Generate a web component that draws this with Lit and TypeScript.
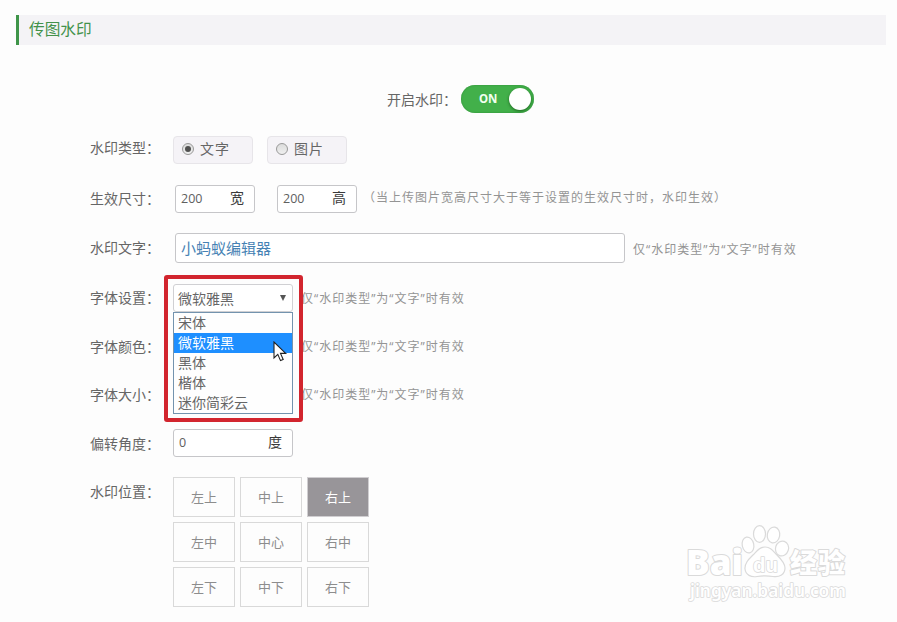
import { LitElement, html, css, svg } from "lit";
import { customElement, state } from "lit/decorators.js";
import { classMap } from "lit/directives/class-map.js";

const FONTS = ["宋体", "微软雅黑", "黑体", "楷体", "迷你简彩云"];
const POSITIONS = ["左上", "中上", "右上", "左中", "中心", "右中", "左下", "中下", "右下"];
const TEXT_ONLY = "仅“水印类型”为“文字”时有效";

@customElement("app-root")
export class AppRoot extends LitElement {
  @state() private kind = "文字";
  @state() private font = "微软雅黑";
  @state() private position = "右上";

  static styles = css`
    :host {
      display: block;
      position: relative;
      width: 897px;
      height: 622px;
      overflow: hidden;
      box-sizing: border-box;
      padding: 15px 11px 0 16px;
      background: #fdfdfd;
      color: #666;
      font: 14px/20px "Open Sans", "Noto Sans CJK SC", sans-serif;
    }
    * { box-sizing: border-box; }
    .title {
      height: 30px;
      border-left: 3px solid #3f9549;
      background: #f4f3f6;
      color: #43924b;
      font-size: 15.7px;
      line-height: 29px;
      padding-left: 10px;
    }
    .enable {
      display: flex;
      align-items: center;
      height: 28px;
      margin: 40px 0 0 371px;
    }
    .enable .name { width: 74px; padding-top: 1px; }
    .switch {
      display: flex;
      align-items: center;
      justify-content: space-between;
      width: 73px;
      height: 28px;
      padding: 0 3px 0 18px;
      border-radius: 14px;
      background: #42b04a;
      box-shadow: inset 0 0 2px #2e8b36;
      color: #f2fff0;
      font-family: "Noto Sans", sans-serif;
      font-size: 11.5px;
      font-weight: 700;
    }
    .knob {
      width: 22px;
      height: 22px;
      border-radius: 50%;
      background: #fff;
      box-shadow: 0 1px 3px rgba(0, 50, 0, 0.6);
    }
    .form { padding: 23px 0 0 74px; }
    .row { display: flex; align-items: flex-start; height: 49px; }
    .row.size { height: 48px; }
    .row.text { height: 51px; }
    .row.set { height: 48px; }
    .row.set.first { height: 49px; }
    .row.last { height: auto; }
    .name { white-space: nowrap; }
    .row > .name { width: 83px; padding-top: 2px; }
    .row.size > .name, .row.text > .name { width: 85px; }
    .row.size > .name, .row.set > .name { padding-top: 4px; }
    .row.text > .name, .row.angle-row > .name, .row.last > .name { padding-top: 5px; }
    .hint {
      color: #949494;
      font-size: 12px;
      line-height: 18px;
      letter-spacing: 1px;
      white-space: nowrap;
    }
    .radio {
      display: flex;
      align-items: center;
      width: 80px;
      height: 28px;
      margin-right: 14px;
      padding-left: 8px;
      border: 1px solid #e7e5e9;
      border-radius: 4px;
      background: #f5f3f7;
      letter-spacing: 1px;
    }
    .radio span { padding-bottom: 2px; }
    .dot {
      display: grid;
      place-items: center;
      width: 12px;
      height: 12px;
      margin-right: 6px;
      margin-bottom: 2px;
      border: 1px solid #999;
      border-radius: 50%;
      background: linear-gradient(#dcdcdc, #efefef);
    }
    .dot.on::after {
      content: "";
      width: 6px;
      height: 6px;
      border-radius: 50%;
      background: #505050;
    }
    .field {
      display: flex;
      align-items: center;
      justify-content: space-between;
      width: 80px;
      height: 28px;
      padding: 0 10px 1px 5px;
      border: 1px solid #c6c6c9;
      border-radius: 3px;
      background: #fff;
      color: #606060;
      font-size: 12.5px;
    }
    .field b { font-weight: 400; font-size: 14px; color: #3a3a3a; padding-bottom: 2px; }
    .size .field { margin-right: 22px; }
    .size .field + .field { margin-right: 6px; }
    .size .hint { padding-top: 4px; }
    .field.wide { width: 450px; height: 30px; color: #4682b4; font-size: 15px; }
    .text .hint { padding: 8px 0 0 8px; }
    .set .hint { padding: 5px 0 0 8px; }
    .set.first .hint { padding-top: 6px; }
    .field.angle { width: 120px; }
    .row.angle-row { height: 48px; }
    .picker { position: relative; width: 120px; height: 28px; }
    .blank { width: 120px; }
    .picker .field { width: 120px; font-size: 14px; color: #666; padding: 1px 6px 0 4px; border-color: #d0d0d3; }
    .arrow {
      border: 3.5px solid transparent;
      border-top: 6px solid #555;
      border-bottom: 0;
      margin-bottom: 2px;
    }
    .list {
      position: absolute;
      z-index: 2;
      top: 28px;
      left: 0;
      width: 120px;
      height: 102px;
      border: 1px solid #7393ae;
      background: #fefefe;
    }
    .option { height: 20px; padding-left: 4px; line-height: 20px; }
    .option.on { background: #1e8fff; color: #fff; }
    .frame {
      position: absolute;
      z-index: 3;
      top: -9px;
      left: -9px;
      width: 139px;
      height: 147px;
      border: 4px solid #d2252e;
      border-radius: 3px;
    }
    .cursor { position: absolute; z-index: 4; left: 100px; top: 57px; }
    .grid { display: grid; grid-template-columns: repeat(3, 62px); grid-auto-rows: 40px; gap: 5px; }
    .cell {
      display: grid;
      place-items: center;
      border: 1px solid #d9d9d9;
      background: #fdfdfd;
      color: #8d8d8d;
      font-size: 13px;
    }
    .cell.on { background: #989599; color: #fff; border-color: #d0ced1; }
    .mark { position: absolute; left: 680px; top: 518px; }
    .mark text { fill: #fff; stroke: #dadada; stroke-width: 2px; paint-order: stroke; stroke-linejoin: round; }
    .brand { font: 900 35px "Noto Sans", sans-serif; }
    .mark .du { font: 700 21px "Liberation Sans", sans-serif; stroke-width: 1.6px; }
    .cn { font: 900 27px "Noto Sans CJK SC", sans-serif; }
    .mark .site { font: 600 17px "Noto Sans", sans-serif; stroke-width: 1.6px; }
    .paw { fill: #fff; stroke: #dadada; stroke-width: 1.2px; }
  `;

  private radio(label: string) {
    return html`<div class="radio" @click=${() => (this.kind = label)}>
      <i class=${classMap({ dot: true, on: this.kind === label })}></i><span>${label}</span>
    </div>`;
  }

  private watermark() {
    return html`<svg class="mark" width="180" height="92" viewBox="0 0 180 92">
      ${svg`
        <text class="brand" x="6" y="57" textLength="57" lengthAdjust="spacingAndGlyphs">Bai</text>
        <ellipse class="paw" cx="68" cy="27" rx="5.8" ry="8" transform="rotate(-12 68 27)"/>
        <ellipse class="paw" cx="79.500" cy="16" rx="6" ry="8.300"/>
        <ellipse class="paw" cx="93.500" cy="17" rx="6.200" ry="8" transform="rotate(10 93.500 17)"/>
        <ellipse class="paw" cx="102" cy="30.500" rx="6.500" ry="7.500" transform="rotate(18 102 30.500)"/>
        <path class="paw" d="M85 29c-6 0-8 4-12 8s-8.500 8-8 14c.7 6 6 8.500 12 7.500 6-1 10-1 16 0 6.500 1 12-2 12-8.500 0-5-4-9-8-13s-6-8-12-8z"/>
        <text class="du" x="73" y="54" textLength="25" lengthAdjust="spacingAndGlyphs">du</text>
        <text class="cn" x="110" y="55" textLength="55">经验</text>
        <text class="site" x="10" y="79" textLength="156" lengthAdjust="spacingAndGlyphs">jingyan.baidu.com</text>
      `}
    </svg>`;
  }

  render() {
    return html`
      <div class="title">传图水印</div>
      <div class="enable">
        <span class="name">开启水印：</span>
        <div class="switch">ON<i class="knob"></i></div>
      </div>
      <div class="form">
        <div class="row"><span class="name">水印类型：</span>${this.radio("文字")}${this.radio("图片")}</div>
        <div class="row size">
          <span class="name">生效尺寸：</span>
          <div class="field">200<b>宽</b></div>
          <div class="field">200<b>高</b></div>
          <span class="hint">（当上传图片宽高尺寸大于等于设置的生效尺寸时，水印生效）</span>
        </div>
        <div class="row text">
          <span class="name">水印文字：</span>
          <div class="field wide">小蚂蚁编辑器</div>
          <span class="hint">${TEXT_ONLY}</span>
        </div>
        <div class="row set first">
          <span class="name">字体设置：</span>
          <div class="picker">
            <div class="field">${this.font}<i class="arrow"></i></div>
            <div class="list">
              ${FONTS.map(
                (f) => html`<div class=${classMap({ option: true, on: f === this.font })} @click=${() => (this.font = f)}>${f}</div>`
              )}
            </div>
            <div class="frame"></div>
            <svg class="cursor" width="15" height="21" viewBox="0 0 15 21">
              <path d="M1 1v16l3.800-3.600 2.700 6.200 2.700-1.200-2.700-6h5.200z" fill="#fff" stroke="#222" stroke-width="1.100" />
            </svg>
          </div>
          <span class="hint">${TEXT_ONLY}</span>
        </div>
        <div class="row set"><span class="name">字体颜色：</span><div class="blank"></div><span class="hint">${TEXT_ONLY}</span></div>
        <div class="row set"><span class="name">字体大小：</span><div class="blank"></div><span class="hint">${TEXT_ONLY}</span></div>
        <div class="row angle-row"><span class="name">偏转角度：</span><div class="field angle">0<b>度</b></div></div>
        <div class="row last">
          <span class="name">水印位置：</span>
          <div class="grid">
            ${POSITIONS.map(
              (p) => html`<div class=${classMap({ cell: true, on: p === this.position })} @click=${() => (this.position = p)}>${p}</div>`
            )}
          </div>
        </div>
      </div>
      ${this.watermark()}
    `;
  }
}
